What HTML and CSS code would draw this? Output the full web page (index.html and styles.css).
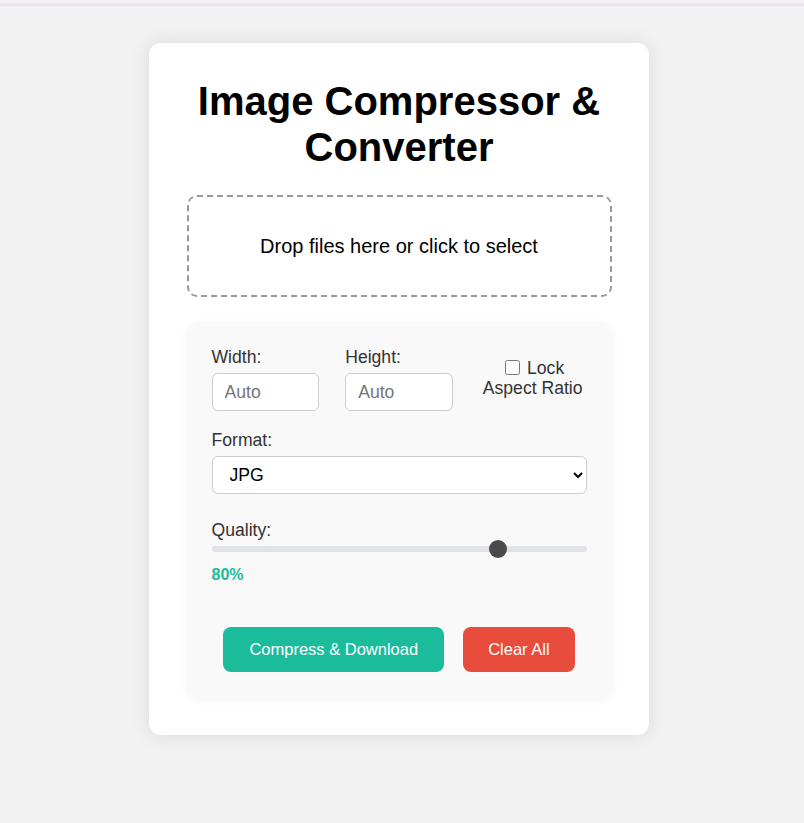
FILE: index.html
```html
<!DOCTYPE html>
<html lang="en">
<head>
<meta charset="utf-8">
<title>Image Compressor &amp; Converter</title>
<link rel="stylesheet" href="styles.css">
</head>
<body>
<div class="topline"></div>
<div class="page">
<main class="card">
  <h1 class="title">Image Compressor &amp; Converter</h1>
  <div class="dropzone">Drop files here or click to select</div>
  <section class="panel">
    <div class="dims">
      <div class="field">
        <label class="label" for="w">Width:</label>
        <input class="num" id="w" type="text" placeholder="Auto">
      </div>
      <div class="field">
        <label class="label" for="h">Height:</label>
        <input class="num" id="h" type="text" placeholder="Auto">
      </div>
      <div class="lock">
        <label class="lock-label"><input type="checkbox" class="check"> Lock Aspect Ratio</label>
      </div>
    </div>
    <div class="format">
      <label class="label" for="fmt">Format:</label>
      <select class="select" id="fmt">
        <option>JPG</option>
        <option>PNG</option>
        <option>WEBP</option>
      </select>
    </div>
    <div class="quality">
      <label class="label q-label" for="q">Quality:</label>
      <input class="range" id="q" type="range" min="10" max="100" value="80">
      <div class="qval">80%</div>
    </div>
    <div class="actions">
      <button class="btn btn-primary">Compress &amp; Download</button>
      <button class="btn btn-danger">Clear All</button>
    </div>
  </section>
</main>
</div>
</body>
</html>
```
FILE: styles.css
```css
html, body {
  margin: 0;
  padding: 0;
}
body {
  background: #f2f2f2;
  font-family: "Liberation Sans", Arial, sans-serif;
  color: #333;
  min-height: 823px;
  box-sizing: border-box;
}
.topline {
  height: 2px;
  margin-top: 3px;
  background: #f2e2f2;
  border-bottom: 1px solid #ecdcec;
}
.page {
  padding-right: 6px;
}
.card {
  box-sizing: border-box;
  width: 500px;
  margin: 37px auto 0;
  background: #fff;
  border-radius: 12px;
  padding: 35px 37.5px 37px;
  box-shadow: 0 0 20px rgba(0, 0, 0, 0.1);
}
.title {
  margin: 0 0 25px;
  font-size: 40px;
  line-height: 46px;
  font-weight: bold;
  color: #000;
  text-align: center;
}
.dropzone {
  border: 2px dashed #999;
  border-radius: 10px;
  padding: 37px 20px;
  line-height: 24px;
  font-size: 20px;
  color: #000;
  text-align: center;
}
.panel {
  margin-top: 25px;
  background: #f9f9f9;
  border-radius: 12px;
  padding: 25px 25px 26px;
  box-shadow: 0 2px 10px rgba(0, 0, 0, 0.05);
}
.dims {
  display: flex;
  gap: 26px;
  align-items: center;
}
.field {
  flex: 1;
  min-width: 0;
}
.label {
  display: block;
  font-size: 17.6px;
  line-height: 20px;
  color: #333;
  margin-bottom: 6px;
}
.num {
  box-sizing: border-box;
  display: block;
  width: 100%;
  height: 38px;
  padding: 0 12px;
  border: 1px solid #ccc;
  border-radius: 6px;
  background: #fff;
  font-family: "Liberation Sans", Arial, sans-serif;
  font-size: 17.6px;
  color: #333;
  outline: none;
}
.num::placeholder {
  color: #757575;
}
.lock {
  flex: 1;
  min-width: 0;
  text-align: center;
  margin-top: -2px;
}
.lock-label {
  font-size: 17.6px;
  line-height: 20px;
  color: #333;
}
.check {
  margin: 0 2px 0 4px;
  width: 15px;
  height: 15px;
  vertical-align: -1px;
}
.format {
  margin-top: 19px;
}
.select {
  box-sizing: border-box;
  display: block;
  width: 100%;
  height: 38px;
  padding: 0 13px;
  border: 1px solid #ccc;
  border-radius: 6px;
  background: #fff;
  font-family: "Liberation Sans", Arial, sans-serif;
  font-size: 17.6px;
  color: #000;
}
.quality {
  margin-top: 26px;
}
.q-label {
  margin-bottom: 6px;
}
.range {
  -webkit-appearance: none;
  appearance: none;
  display: block;
  width: 100%;
  height: 6px;
  margin: 0;
  border-radius: 3px;
  background: #dfe2e6;
  outline: none;
}
.range::-webkit-slider-thumb {
  -webkit-appearance: none;
  appearance: none;
  width: 18px;
  height: 18px;
  border-radius: 50%;
  background: #4a4a4a;
  border: none;
}
.qval {
  margin-top: 14px;
  font-size: 16px;
  line-height: 18px;
  font-weight: bold;
  color: #1abc9c;
}
.actions {
  display: flex;
  justify-content: center;
  gap: 19px;
  margin-top: 43px;
}
.btn {
  border: none;
  border-radius: 8px;
  height: 45px;
  padding: 0 26px;
  font-family: "Liberation Sans", Arial, sans-serif;
  font-size: 16.5px;
  color: #fff;
  cursor: pointer;
}
.btn-primary {
  background: #1abc9c;
}
.btn-danger {
  background: #e74c3c;
  padding: 0 25px;
}
```
